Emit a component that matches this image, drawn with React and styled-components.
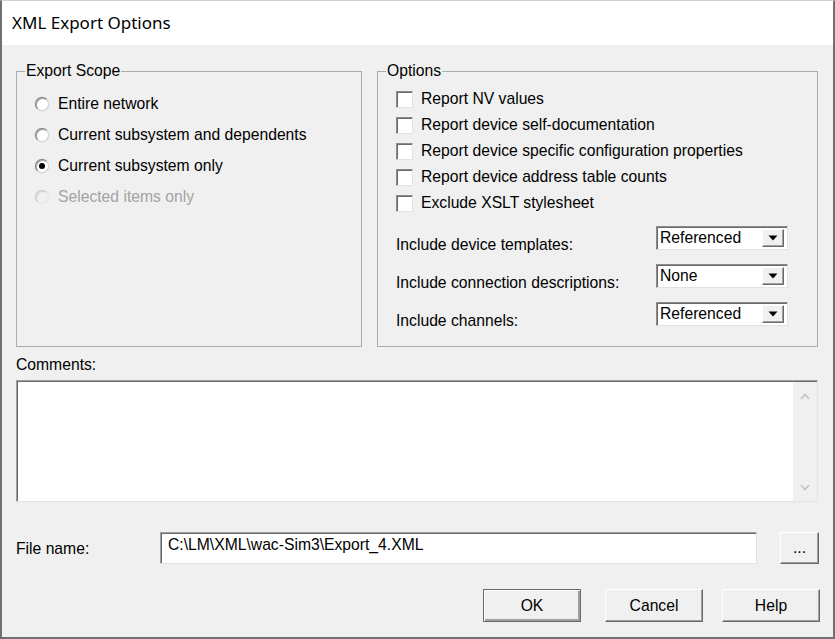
import styled, { createGlobalStyle } from "styled-components";

const GlobalStyle = createGlobalStyle`
  html, body {
    margin: 0;
    padding: 0;
    background: #ffffff;
  }
  * {
    box-sizing: border-box;
  }
`;

const DialogWindow = styled.div`
  width: 835px;
  height: 639px;
  display: flex;
  flex-direction: column;
  border-left: 2px solid #707070;
  border-right: 2px solid #707070;
  border-bottom: 2px solid #707070;
  border-top: 1px solid #cfcfcf;
  font-family: "Liberation Sans", Arial, sans-serif;
  font-size: 15.7px;
  color: #000;
`;

const TitleBar = styled.div`
  height: 44px;
  flex: none;
  display: flex;
  align-items: center;
  padding-left: 10px;
  padding-bottom: 1px;
  background: #ffffff;
  font-family: "Noto Sans", "Open Sans", sans-serif;
  font-size: 17px;
`;

const Body = styled.div`
  flex: 1;
  display: flex;
  flex-direction: column;
  background: #f0f0f0;
  padding: 17px 15px 0 14px;
`;

const GroupsRow = styled.div`
  display: grid;
  grid-template-columns: 346px 441px;
  column-gap: 15px;
  height: 285px;
`;

const GroupBox = styled.fieldset`
  margin: 0;
  padding: 0 0 0 18px;
  border: 1px solid #acacac;
  min-width: 0;
  display: flex;
  flex-direction: column;
`;

const GroupTitle = styled.legend`
  margin-left: -10px;
  padding: 0 1px;
  line-height: 18px;
`;

const RadioList = styled.div`
  padding-top: 8px;
  display: flex;
  flex-direction: column;
`;

const RadioRow = styled.label`
  height: 31px;
  display: flex;
  align-items: center;
  gap: 9px;
  color: ${(p) => (p.$disabled ? "#a3a3a3" : "#000")};
`;

const RadioMark = styled.span`
  width: 14px;
  height: 14px;
  flex: none;
  border-radius: 50%;
  display: flex;
  align-items: center;
  justify-content: center;
  background: ${(p) => (p.$disabled ? "#f0f0f0" : "#ffffff")};
  border: 1px solid;
  border-color: ${(p) =>
    p.$disabled
      ? "#c8c8c8 #e4e4e4 #e4e4e4 #c8c8c8"
      : "#7d7d7d #d4d4d4 #d4d4d4 #7d7d7d"};
  box-shadow: ${(p) =>
    p.$disabled
      ? "inset 1px 1px 0 #d8d8d8"
      : "inset 1px 1px 0 #a8a8a8, 0 0 0 0.5px #e0e0e0"};

  &::after {
    content: "";
    display: ${(p) => (p.$checked ? "block" : "none")};
    width: 6px;
    height: 6px;
    border-radius: 50%;
    background: #000;
  }
`;

const CheckList = styled.div`
  padding-top: 6px;
  display: flex;
  flex-direction: column;
`;

const CheckRow = styled.label`
  height: 26px;
  display: flex;
  align-items: center;
  gap: 8px;
`;

const CheckMark = styled.span`
  width: 17px;
  height: 17px;
  flex: none;
  background: #ffffff;
  border: 1px solid;
  border-color: #8c8c8c #e3e3e3 #e3e3e3 #8c8c8c;
  box-shadow: inset 1px 1px 0 #6a6a6a;
`;

const ComboList = styled.div`
  margin-top: 10px;
  display: flex;
  flex-direction: column;
`;

const ComboRow = styled.div`
  height: 38px;
  display: flex;
  align-items: flex-start;
`;

const ComboLabel = styled.span`
  width: 260px;
  flex: none;
  padding-top: 10px;
  line-height: 18px;
`;

const Combo = styled.div`
  width: 132px;
  height: 24px;
  flex: none;
  display: flex;
  align-items: center;
  justify-content: space-between;
  padding: 0 3px 0 3px;
  background: #ffffff;
  border: 1px solid;
  border-color: #8c8c8c #e3e3e3 #e3e3e3 #8c8c8c;
  box-shadow: inset 1px 1px 0 #6a6a6a;
  line-height: 18px;
`;

const ComboButton = styled.span`
  width: 22px;
  height: 18px;
  flex: none;
  display: flex;
  align-items: center;
  justify-content: center;
  background: #f0f0f0;
  border: 1px solid;
  border-color: #ffffff #696969 #696969 #ffffff;
  box-shadow: inset -1px -1px 0 #a0a0a0;
`;

const FieldLabel = styled.div`
  line-height: 18px;
  margin-top: ${(p) => p.$top || 0}px;
`;

const CommentsBox = styled.div`
  margin-top: 6px;
  height: 122px;
  display: flex;
  justify-content: flex-end;
  background: #ffffff;
  border: 1px solid;
  border-color: #a0a0a0 #e3e3e3 #e3e3e3 #a0a0a0;
  box-shadow: inset 1px 1px 0 #696969;
  padding: 1px 0 0 1px;
`;

const ScrollTrack = styled.div`
  width: 24px;
  display: flex;
  flex-direction: column;
  justify-content: space-between;
  align-items: center;
  padding: 11px 0 10px;
  background: #f0f0f0;
`;

const FileRow = styled.div`
  margin-top: 30px;
  height: 32px;
  display: flex;
  align-items: center;
`;

const FileLabel = styled.span`
  width: 144px;
  flex: none;
  padding-top: 2px;
`;

const TextInput = styled.div`
  width: 597px;
  height: 32px;
  flex: none;
  padding: 3px 0 0 7px;
  background: #ffffff;
  border: 1px solid;
  border-color: #a0a0a0 #e3e3e3 #e3e3e3 #a0a0a0;
  box-shadow: inset 1px 1px 0 #696969;
  line-height: 18px;
`;

const PushButton = styled.div`
  width: ${(p) => p.$width || 98}px;
  height: ${(p) => p.$height || 33}px;
  margin-left: ${(p) => p.$gap || 0}px;
  flex: none;
  display: flex;
  align-items: center;
  justify-content: center;
  background: #f0f0f0;
  border: 1px solid;
  border-color: ${(p) =>
    p.$default ? "#696969" : "#ffffff #696969 #696969 #ffffff"};
  box-shadow: ${(p) =>
    p.$default
      ? "inset 1px 1px 0 #ffffff, inset -2px -2px 0 #a0a0a0"
      : "inset -1px -1px 0 #a0a0a0"};
`;

const ButtonRow = styled.div`
  margin-top: 25px;
  margin-right: -2px;
  display: flex;
  justify-content: flex-end;
`;

function Radio({ checked, disabled, children }) {
  return (
    <RadioRow $disabled={disabled}>
      <RadioMark $checked={checked} $disabled={disabled} />
      {children}
    </RadioRow>
  );
}

function Check({ children }) {
  return (
    <CheckRow>
      <CheckMark />
      {children}
    </CheckRow>
  );
}

function Select({ label, value }) {
  return (
    <ComboRow>
      <ComboLabel>{label}</ComboLabel>
      <Combo>
        <span>{value}</span>
        <ComboButton>
          <svg width="10" height="6" viewBox="0 0 10 6">
            <path d="M0.5 0.5 L9.5 0.5 L5 5.5 Z" fill="#000" />
          </svg>
        </ComboButton>
      </Combo>
    </ComboRow>
  );
}

export default function App() {
  return (
    <>
      <GlobalStyle />
      <DialogWindow>
        <TitleBar>XML Export Options</TitleBar>
        <Body>
          <GroupsRow>
            <GroupBox>
              <GroupTitle>Export Scope</GroupTitle>
              <RadioList>
                <Radio>Entire network</Radio>
                <Radio>Current subsystem and dependents</Radio>
                <Radio checked>Current subsystem only</Radio>
                <Radio disabled>Selected items only</Radio>
              </RadioList>
            </GroupBox>
            <GroupBox>
              <GroupTitle>Options</GroupTitle>
              <CheckList>
                <Check>Report NV values</Check>
                <Check>Report device self-documentation</Check>
                <Check>Report device specific configuration properties</Check>
                <Check>Report device address table counts</Check>
                <Check>Exclude XSLT stylesheet</Check>
              </CheckList>
              <ComboList>
                <Select label="Include device templates:" value="Referenced" />
                <Select label="Include connection descriptions:" value="None" />
                <Select label="Include channels:" value="Referenced" />
              </ComboList>
            </GroupBox>
          </GroupsRow>

          <FieldLabel $top={9}>Comments:</FieldLabel>
          <CommentsBox>
            <ScrollTrack>
              <svg width="10" height="7" viewBox="0 0 10 7">
                <path d="M1 6 L5 1.5 L9 6" fill="none" stroke="#c2c2c2" strokeWidth="1.6" />
              </svg>
              <svg width="10" height="7" viewBox="0 0 10 7">
                <path d="M1 1 L5 5.5 L9 1" fill="none" stroke="#c2c2c2" strokeWidth="1.6" />
              </svg>
            </ScrollTrack>
          </CommentsBox>

          <FileRow>
            <FileLabel>File name:</FileLabel>
            <TextInput>C:\LM\XML\wac-Sim3\Export_4.XML</TextInput>
            <PushButton $width={39} $height={32} $gap={23}>
              ...
            </PushButton>
          </FileRow>

          <ButtonRow>
            <PushButton $default>OK</PushButton>
            <PushButton $gap={24}>Cancel</PushButton>
            <PushButton $gap={19}>Help</PushButton>
          </ButtonRow>
        </Body>
      </DialogWindow>
    </>
  );
}
